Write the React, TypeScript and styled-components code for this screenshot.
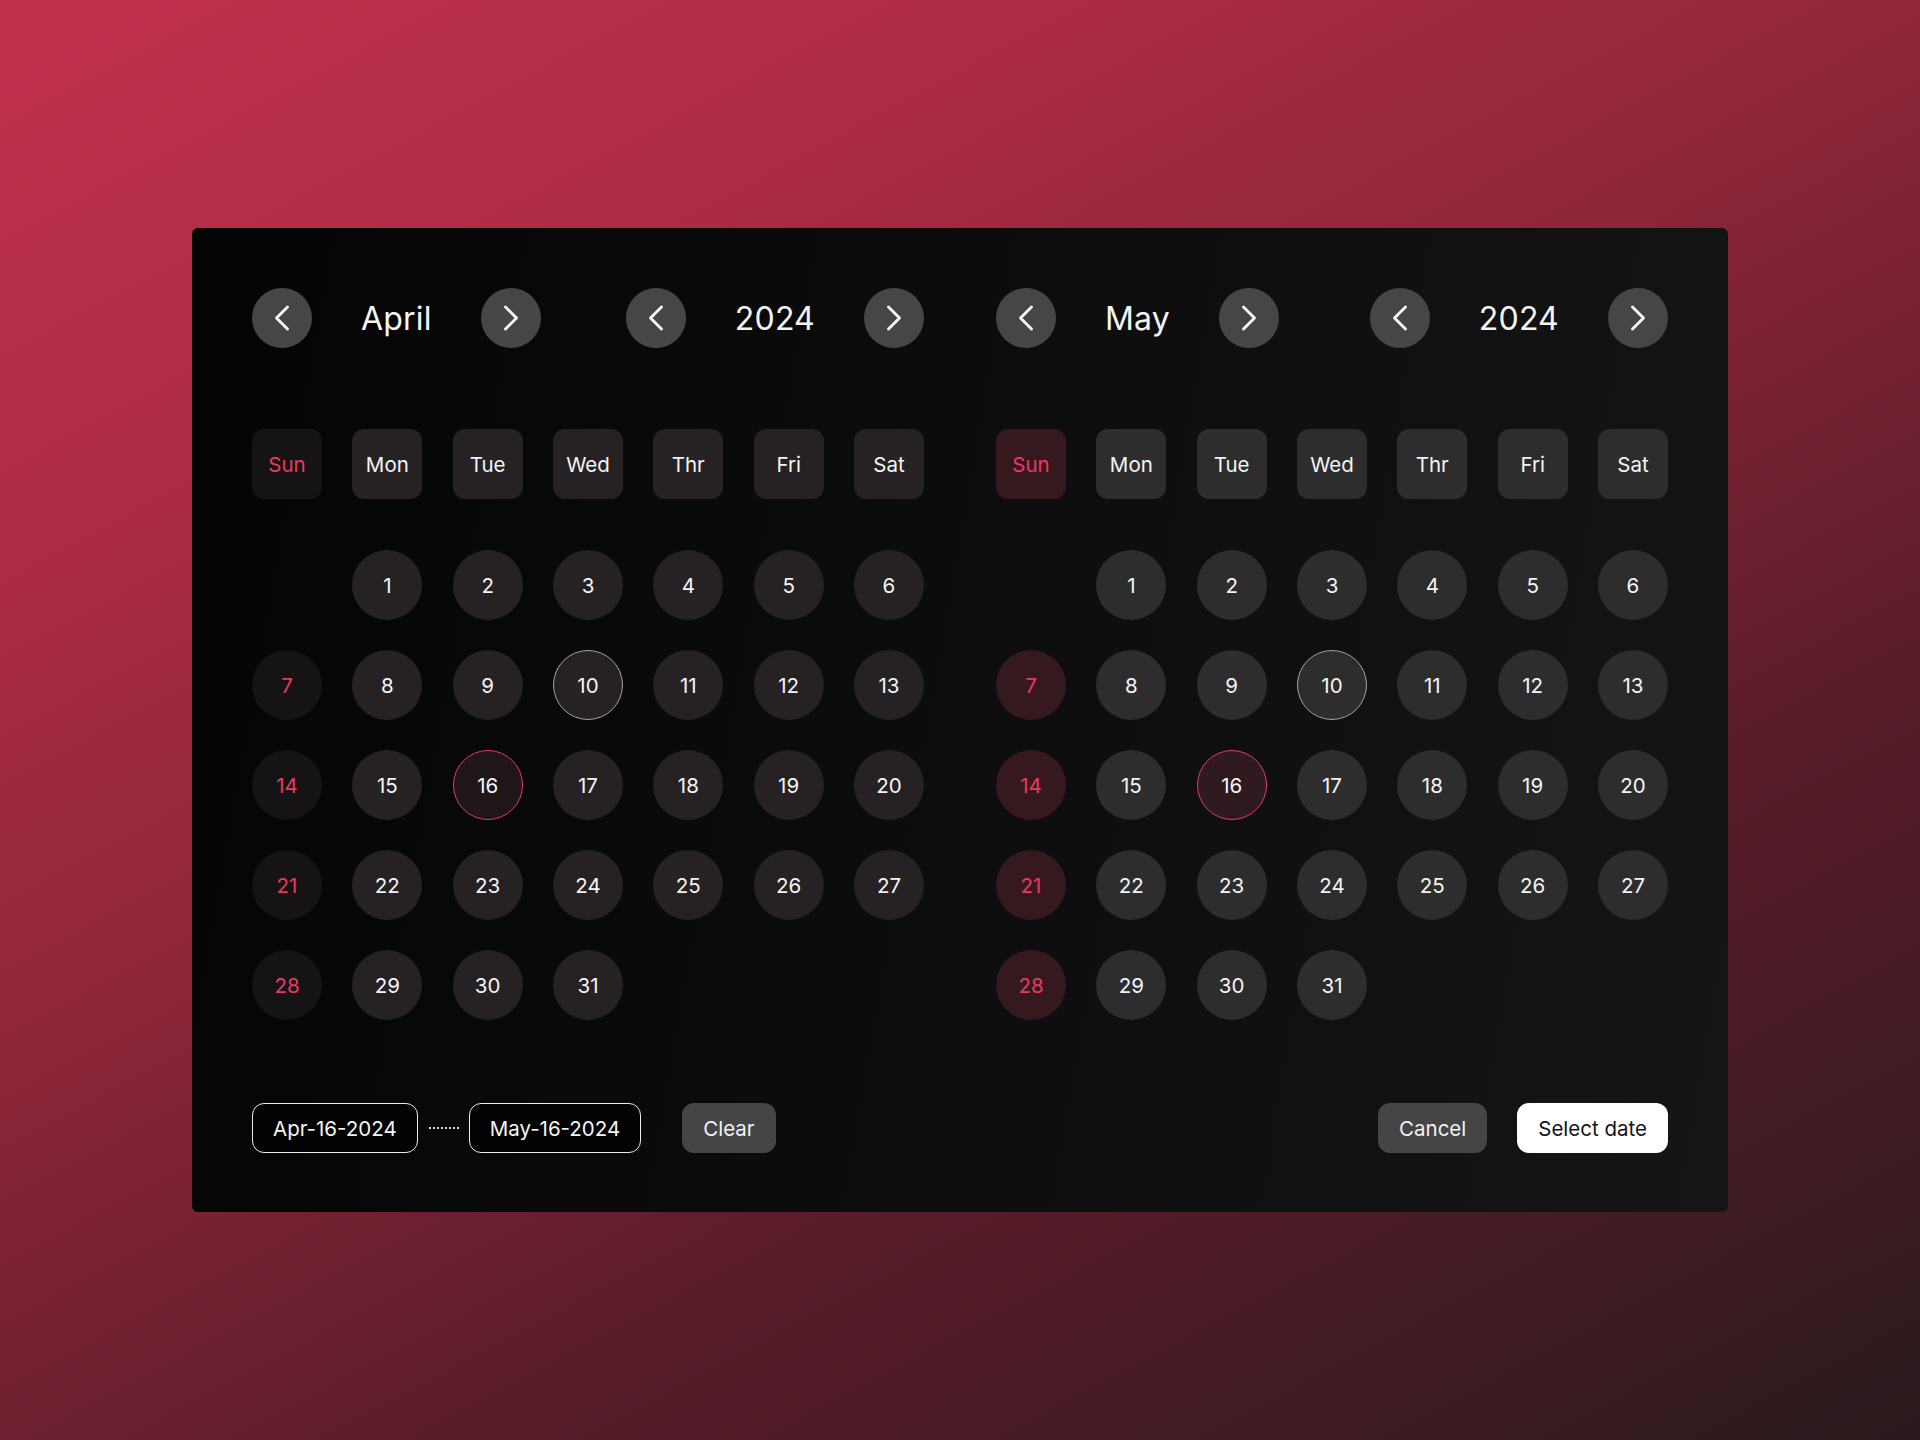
import React from "react";
import styled, { createGlobalStyle, css } from "styled-components";
import { ChevronLeft, ChevronRight } from "lucide-react";

const GlobalStyle = createGlobalStyle`
  * { box-sizing: border-box; }
  body {
    margin: 0;
    font-family: Inter, "Noto Sans", sans-serif;
    background: #2a1b1e;
  }
`;

type Side = "left" | "right";

const palette = {
  left: { cell: "#262223", sun: "#161314", selected: "#1e1618" },
  right: { cell: "#2d2d2d", sun: "#36191f", selected: "#2f1a20" },
};

const red = "#e63a60";

const Page = styled.div`
  width: 1920px;
  height: 1440px;
  display: flex;
  align-items: center;
  justify-content: center;
  background: linear-gradient(
    152deg,
    #c1304b 0%,
    #ae2c45 22%,
    #8a2538 45%,
    #5a1c29 68%,
    #2a1a1d 100%
  );
`;

const Panel = styled.div`
  width: 1536px;
  height: 984px;
  padding: 60px;
  border-radius: 6px;
  background: linear-gradient(100deg, #040404 0%, #0c0c0c 45%, #151515 100%);
  display: flex;
  flex-direction: column;
  color: #f4f4f4;
`;

const Calendars = styled.div`
  display: flex;
  justify-content: space-between;
`;

const Month = styled.div`
  width: 672px;
  display: flex;
  flex-direction: column;
`;

const NavRow = styled.div`
  height: 60px;
  display: flex;
  align-items: center;
  justify-content: space-between;
`;

const NavGroup = styled.div`
  display: flex;
  align-items: center;
  gap: 49px;
`;

const NavButton = styled.button`
  width: 60px;
  height: 60px;
  border-radius: 50%;
  border: none;
  padding: 0;
  background: #464646;
  color: #f4f4f4;
  display: flex;
  align-items: center;
  justify-content: center;
  cursor: pointer;
`;

const NavTitle = styled.span`
  font-size: 32px;
  font-weight: 400;
  letter-spacing: 0.2px;
`;

const Grid = styled.div<{ $top: number }>`
  display: grid;
  grid-template-columns: repeat(7, 70px);
  justify-content: space-between;
  row-gap: 30px;
  margin-top: ${(p) => p.$top}px;
`;

const cellBase = css<{ $side: Side; $sun?: boolean }>`
  width: 70px;
  height: 70px;
  display: flex;
  align-items: center;
  justify-content: center;
  font-size: 20.5px;
  color: ${(p) => (p.$sun ? red : "#f4f4f4")};
  background: ${(p) => (p.$sun ? palette[p.$side].sun : palette[p.$side].cell)};
`;

const WeekDay = styled.div<{ $side: Side; $sun?: boolean }>`
  ${cellBase};
  border-radius: 12px;
`;

const Day = styled.div<{
  $side: Side;
  $sun?: boolean;
  $today?: boolean;
  $selected?: boolean;
}>`
  ${cellBase};
  border-radius: 50%;
  ${(p) =>
    p.$today &&
    css`
      border: 1.5px solid #a3a3a3;
    `}
  ${(p) =>
    p.$selected &&
    css`
      border: 1.5px solid ${red};
      background: ${palette[p.$side].selected};
    `}
`;

const Blank = styled.div`
  width: 70px;
  height: 70px;
`;

const Footer = styled.div`
  margin-top: 83px;
  height: 50px;
  display: flex;
  align-items: center;
  justify-content: space-between;
`;

const FooterGroup = styled.div`
  display: flex;
  align-items: center;
`;

const DateField = styled.div`
  height: 50px;
  padding: 0 20px;
  border: 1.5px solid #ececec;
  border-radius: 12px;
  background: #030303;
  display: flex;
  align-items: center;
  font-size: 20.5px;
  color: #f4f4f4;
`;

const Dots = styled.span`
  width: 30px;
  margin: 0 10px 0 11px;
  border-top: 2px dotted #d8d8d8;
`;

const Button = styled.button<{ $primary?: boolean }>`
  height: 50px;
  padding: 0 21px;
  border: none;
  border-radius: 12px;
  font-family: inherit;
  font-size: 20.5px;
  cursor: pointer;
  background: ${(p) => (p.$primary ? "#ffffff" : "#454545")};
  color: ${(p) => (p.$primary ? "#141414" : "#f2f2f2")};
`;

const ClearButton = styled(Button)`
  margin-left: 41px;
`;

const CancelButton = styled(Button)`
  margin-right: 30px;
`;

const weekDays = ["Sun", "Mon", "Tue", "Wed", "Thr", "Fri", "Sat"];

const Nav = ({ label }: { label: string }) => (
  <NavGroup>
    <NavButton aria-label="previous">
      <ChevronLeft size={44} strokeWidth={1.6} />
    </NavButton>
    <NavTitle>{label}</NavTitle>
    <NavButton aria-label="next">
      <ChevronRight size={44} strokeWidth={1.6} />
    </NavButton>
  </NavGroup>
);

const MonthView = ({ name, side }: { name: string; side: Side }) => {
  const cells: (number | null)[] = [null];
  for (let d = 1; d <= 31; d++) cells.push(d);

  return (
    <Month>
      <NavRow>
        <Nav label={name} />
        <Nav label="2024" />
      </NavRow>
      <Grid $top={81}>
        {weekDays.map((w, i) => (
          <WeekDay key={w} $side={side} $sun={i === 0}>
            {w}
          </WeekDay>
        ))}
      </Grid>
      <Grid $top={51}>
        {cells.map((d, i) =>
          d === null ? (
            <Blank key={i} />
          ) : (
            <Day
              key={i}
              $side={side}
              $sun={i % 7 === 0}
              $today={d === 10}
              $selected={d === 16}
            >
              {d}
            </Day>
          )
        )}
      </Grid>
    </Month>
  );
};

export default function App() {
  return (
    <>
      <GlobalStyle />
      <Page>
        <Panel>
          <Calendars>
            <MonthView name="April" side="left" />
            <MonthView name="May" side="right" />
          </Calendars>
          <Footer>
            <FooterGroup>
              <DateField>Apr-16-2024</DateField>
              <Dots />
              <DateField>May-16-2024</DateField>
              <ClearButton>Clear</ClearButton>
            </FooterGroup>
            <FooterGroup>
              <CancelButton>Cancel</CancelButton>
              <Button $primary>Select date</Button>
            </FooterGroup>
          </Footer>
        </Panel>
      </Page>
    </>
  );
}
